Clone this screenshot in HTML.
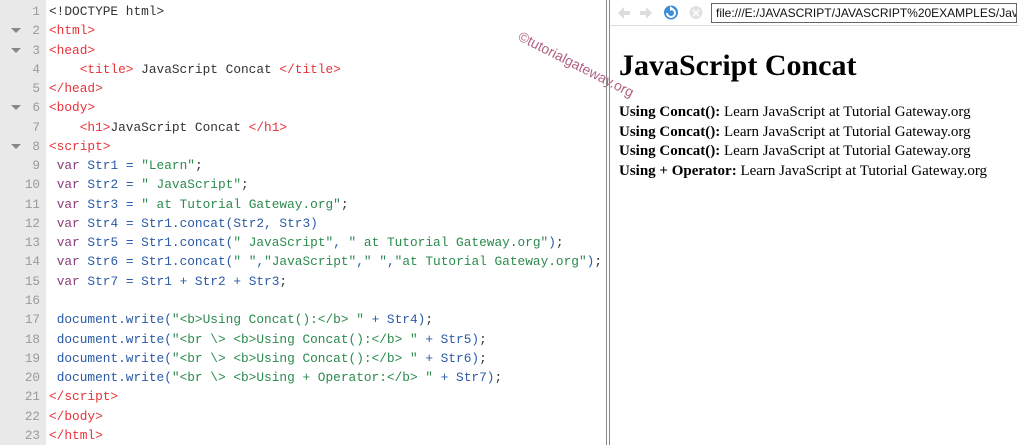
<!DOCTYPE html>
<html><head><style>
body{margin:0;width:1019px;height:445px;background:#fff;position:relative;overflow:hidden}
#gut{position:absolute;left:0;top:0;width:46px;height:445px;background:#e9e9e9}
#code{position:absolute;left:0;top:2px;font-family:"Liberation Mono",monospace;font-size:12.8px;line-height:19.27px;white-space:pre}
.ln{display:inline-block;width:40px;text-align:right;color:#9a9a9a;margin-right:9px;position:relative;font-size:12.65px}
.f::before{content:"";position:absolute;left:11px;top:7px;border-left:5px solid transparent;border-right:5px solid transparent;border-top:5px solid #888}
.t{color:#e8333a}.s{color:#2b8a4e}.v{color:#8a3d7a}.i{color:#2a5aa8}.k{color:#333}
#wm{position:absolute;left:523px;top:28px;transform:rotate(27deg);transform-origin:0 0;color:#a0456a;font-family:"Liberation Sans",sans-serif;font-size:14px;opacity:.85}
#v1{position:absolute;left:606px;top:0;width:1px;height:445px;background:#888}
#v2{position:absolute;left:609px;top:0;width:1px;height:445px;background:#888}
#tb{position:absolute;left:610px;top:0;width:409px;height:25px;border-bottom:1px solid #ddd;background:#fff}
#addr{position:absolute;left:711px;top:3px;width:300px;height:18px;border:1px solid #666;font-family:"Liberation Sans",sans-serif;font-size:12px;line-height:18px;padding-left:4px;overflow:hidden;white-space:nowrap;color:#111}
#page{position:absolute;left:619px;top:49px;font-family:"Liberation Serif",serif;color:#000}
h1{margin:0 0 20px;font-size:30px;line-height:34px}
.l{font-size:15px;line-height:19.7px}
</style></head><body>
<div id="gut"></div>
<div id="code"><span class="ln">1</span><span class="k">&lt;!DOCTYPE html&gt;</span>
<span class="ln f">2</span><span class="t">&lt;html&gt;</span>
<span class="ln f">3</span><span class="t">&lt;head&gt;</span>
<span class="ln">4</span>    <span class="t">&lt;title&gt;</span><span class="k"> JavaScript Concat </span><span class="t">&lt;/title&gt;</span>
<span class="ln">5</span><span class="t">&lt;/head&gt;</span>
<span class="ln f">6</span><span class="t">&lt;body&gt;</span>
<span class="ln">7</span>    <span class="t">&lt;h1&gt;</span><span class="k">JavaScript Concat </span><span class="t">&lt;/h1&gt;</span>
<span class="ln f">8</span><span class="t">&lt;script&gt;</span>
<span class="ln">9</span> <span class="v">var</span> <span class="i">Str1 =</span> <span class="s">"Learn"</span><span class="k">;</span>
<span class="ln">10</span> <span class="v">var</span> <span class="i">Str2 =</span> <span class="s">" JavaScript"</span><span class="k">;</span>
<span class="ln">11</span> <span class="v">var</span> <span class="i">Str3 =</span> <span class="s">" at Tutorial Gateway.org"</span><span class="k">;</span>
<span class="ln">12</span> <span class="v">var</span> <span class="i">Str4 = Str1.concat(Str2, Str3)</span>
<span class="ln">13</span> <span class="v">var</span> <span class="i">Str5 = Str1.concat(</span><span class="s">" JavaScript"</span><span class="i">, </span><span class="s">" at Tutorial Gateway.org"</span><span class="i">)</span><span class="k">;</span>
<span class="ln">14</span> <span class="v">var</span> <span class="i">Str6 = Str1.concat(</span><span class="s">" "</span><span class="i">,</span><span class="s">"JavaScript"</span><span class="i">,</span><span class="s">" "</span><span class="i">,</span><span class="s">"at Tutorial Gateway.org"</span><span class="i">)</span><span class="k">;</span>
<span class="ln">15</span> <span class="v">var</span> <span class="i">Str7 = Str1 + Str2 + Str3</span><span class="k">;</span>
<span class="ln">16</span>
<span class="ln">17</span> <span class="i">document.write(</span><span class="s">"&lt;b&gt;Using Concat():&lt;/b&gt; "</span><span class="i"> + Str4)</span><span class="k">;</span>
<span class="ln">18</span> <span class="i">document.write(</span><span class="s">"&lt;br \&gt; &lt;b&gt;Using Concat():&lt;/b&gt; "</span><span class="i"> + Str5)</span><span class="k">;</span>
<span class="ln">19</span> <span class="i">document.write(</span><span class="s">"&lt;br \&gt; &lt;b&gt;Using Concat():&lt;/b&gt; "</span><span class="i"> + Str6)</span><span class="k">;</span>
<span class="ln">20</span> <span class="i">document.write(</span><span class="s">"&lt;br \&gt; &lt;b&gt;Using + Operator:&lt;/b&gt; "</span><span class="i"> + Str7)</span><span class="k">;</span>
<span class="ln">21</span><span class="t">&lt;/script&gt;</span>
<span class="ln">22</span><span class="t">&lt;/body&gt;</span>
<span class="ln">23</span><span class="t">&lt;/html&gt;</span></div>
<div id="wm">©tutorialgateway.org</div>
<div id="v1"></div><div id="v2"></div>
<div id="tb">
<svg width="100" height="25" style="position:absolute;left:0;top:0">
<path d="M8 13 l6-6 v4 h6 v4 h-6 v4z" fill="#ddd"/>
<path d="M42 13 l-6-6 v4 h-6 v4 h6 v4z" fill="#ddd"/>
<circle cx="61" cy="12.5" r="7" fill="#3a8fd8"/><path d="M57 13a4 4 0 1 0 4-4" stroke="#fff" stroke-width="2" fill="none"/><path d="M60 6l4 3-4 2z" fill="#fff"/>
<circle cx="86" cy="12.5" r="6.5" fill="#e2e2e2"/><path d="M83 10l6 6M89 10l-6 6" stroke="#fff" stroke-width="1.5"/>
</svg>
<div id="addr" style="left:101px">file:///E:/JAVASCRIPT/JAVASCRIPT%20EXAMPLES/Javascript</div>
</div>
<div id="page">
<h1>JavaScript Concat</h1>
<div class="l"><b>Using Concat():</b> Learn JavaScript at Tutorial Gateway.org</div>
<div class="l"><b>Using Concat():</b> Learn JavaScript at Tutorial Gateway.org</div>
<div class="l"><b>Using Concat():</b> Learn JavaScript at Tutorial Gateway.org</div>
<div class="l"><b>Using + Operator:</b> Learn JavaScript at Tutorial Gateway.org</div>
</div>
</body></html>
